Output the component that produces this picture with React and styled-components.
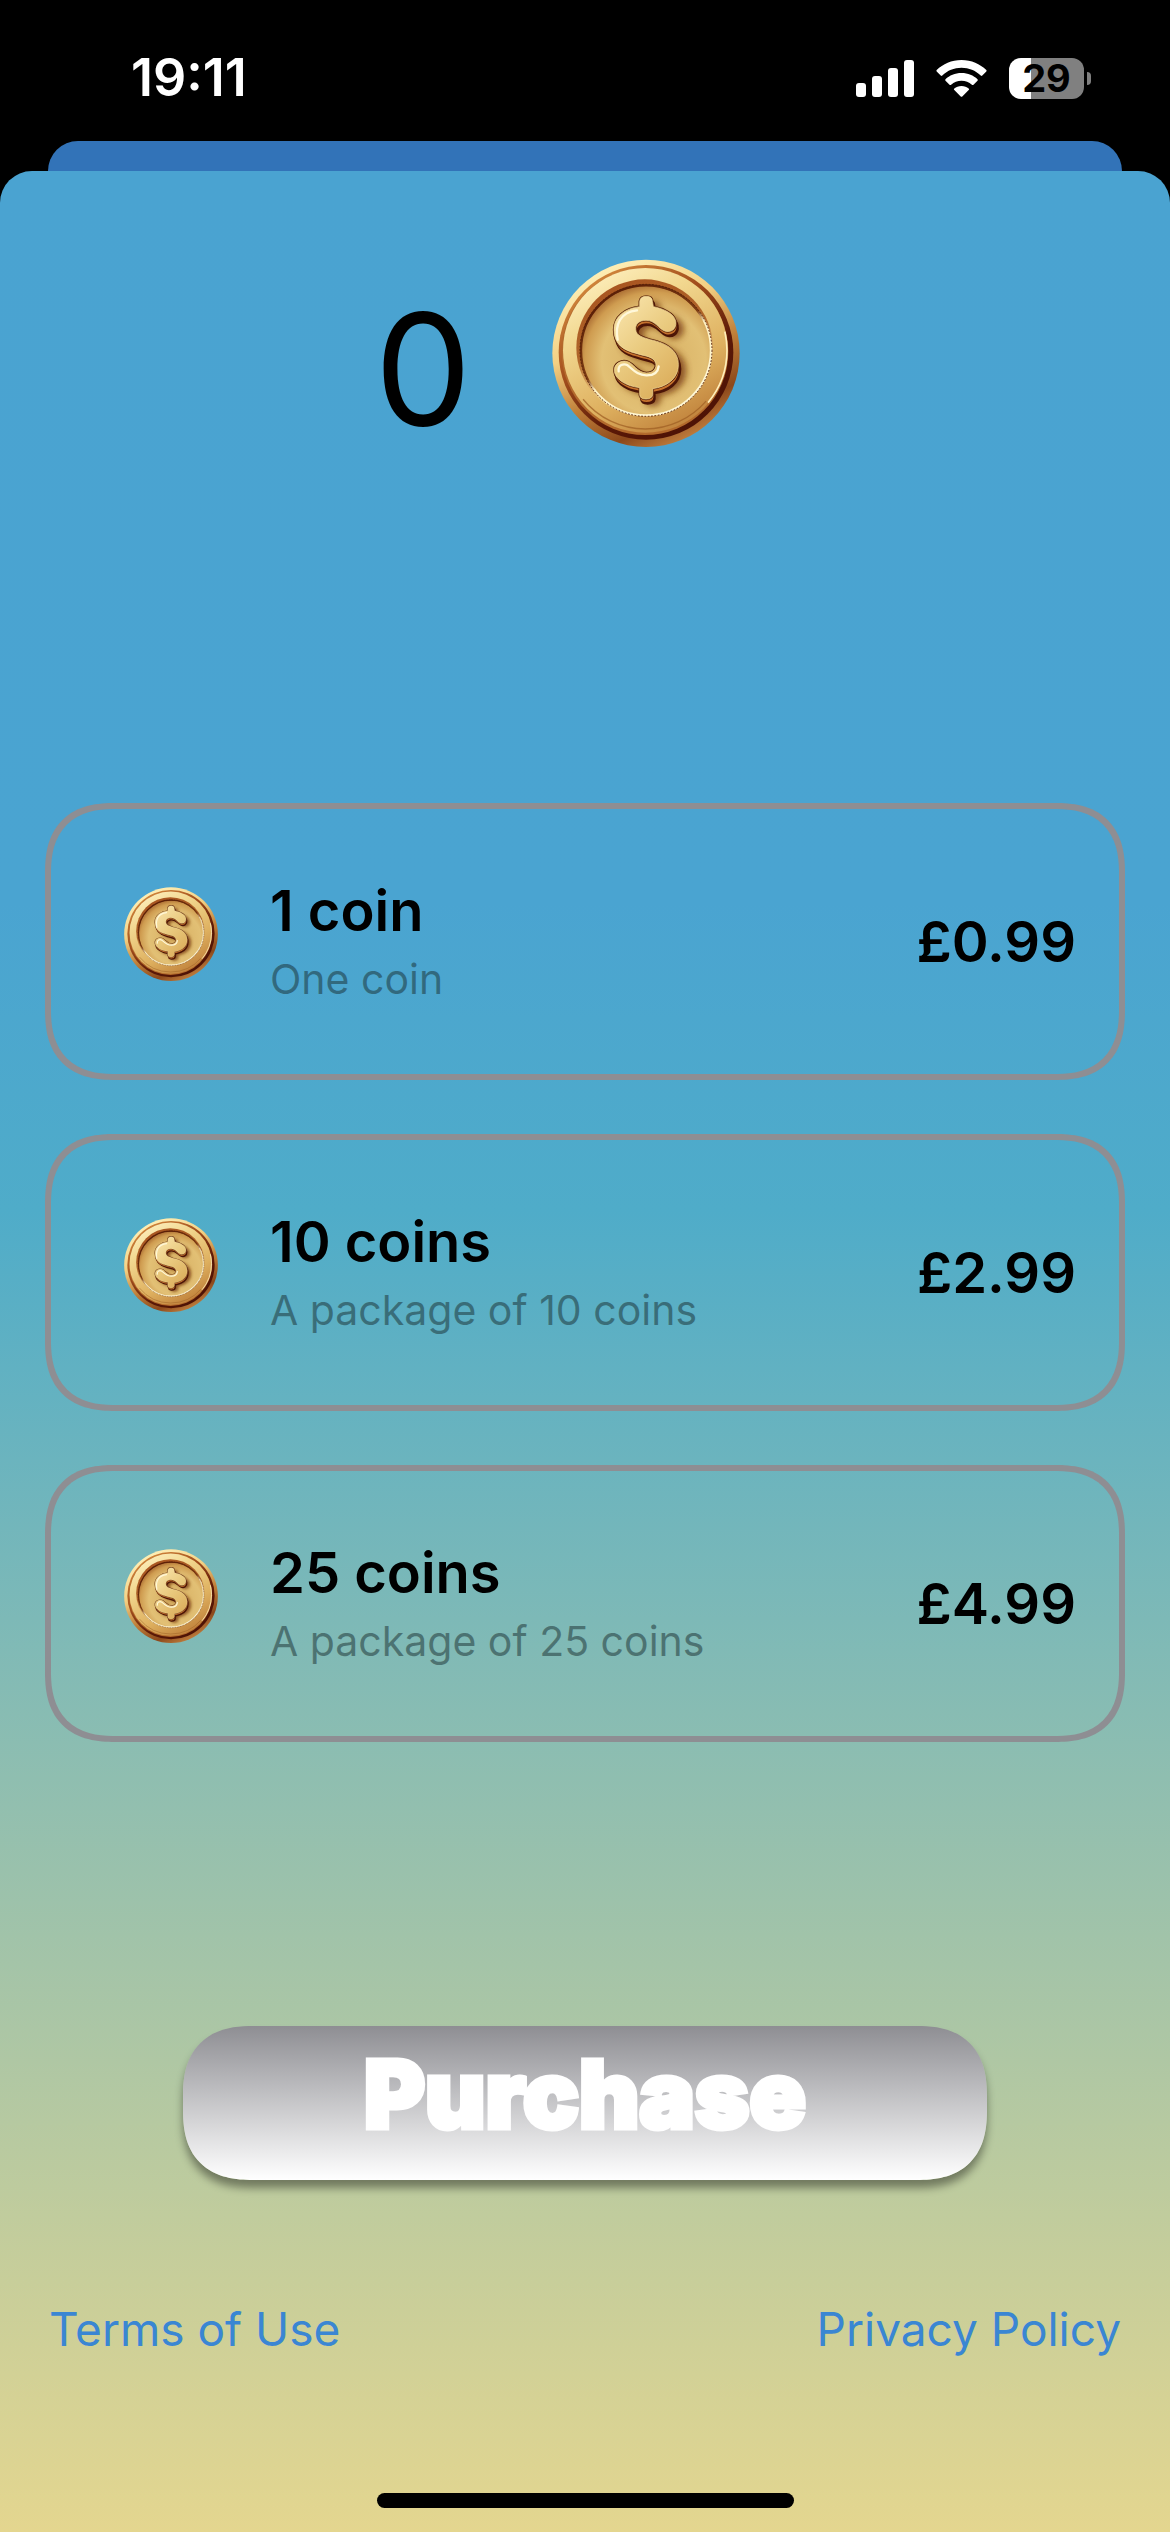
import React, { useState } from 'react';
import styled, { createGlobalStyle } from 'styled-components';

const GlobalStyle = createGlobalStyle`
  * {
    box-sizing: border-box;
  }

  body {
    margin: 0;
    background: #000;
    font-family: Inter, "Liberation Sans", sans-serif;
  }
`;

const Screen = styled.div`
  display: flex;
  flex-direction: column;
  min-height: 100vh;
`;

const StatusBar = styled.header`
  display: flex;
  justify-content: space-between;
  align-items: center;
  height: 141px;
  padding: 15px 79px 0 131px;
  color: white;
`;

const Clock = styled.time`
  font-size: 52px;
  font-weight: 600;
  line-height: 60px;
`;

const StatusIcons = styled.div`
  display: flex;
  align-items: center;
  gap: 22px;
`;

const Battery = styled.div`
  display: flex;
  align-items: center;
  gap: 3px;
`;

const BatteryLevel = styled.div`
  width: 75px;
  height: 41px;
  border-radius: 12px;
  background: linear-gradient(to right, #fff 29%, #808080 29%);
  color: black;
  font-size: 38px;
  font-weight: 700;
  line-height: 41px;
  text-align: center;
`;

const BatteryCap = styled.div`
  width: 4px;
  height: 13px;
  border-radius: 0 4px 4px 0;
  background: #808080;
`;

const BackSheet = styled.div`
  height: 30px;
  margin: 0 48px;
  border-radius: 30px 30px 0 0;
  background: #3273b8;
`;

const Sheet = styled.main`
  flex: 1;
  display: flex;
  flex-direction: column;
  padding: 88px 45px 24px;
  border-radius: 32px 32px 0 0;
  background: linear-gradient(to bottom, #4aa3d1 0%, #4aa4d1 31%, #4facc9 44%, #e4d68f 100%);
`;

const Balance = styled.div`
  display: flex;
  justify-content: center;
  align-items: center;
  gap: 80px;
  padding-right: 56px;
`;

const Amount = styled.span`
  font-size: 154px;
  line-height: 180px;
`;

const Packages = styled.div`
  display: flex;
  flex-direction: column;
  gap: 54px;
  margin-top: 324px;
`;

const Package = styled.button`
  display: flex;
  align-items: center;
  height: 277px;
  padding: 0 43px 0 73px;
  border: 6px solid #8e8e93;
  border-radius: 60px;
  background: none;
  color: black;
  font-family: inherit;
  text-align: left;

  @supports (corner-shape: superellipse(1.3)) {
    border-radius: 70px;
    corner-shape: superellipse(1.3);
  }
`;

const PackageInfo = styled.span`
  flex: 1;
  display: flex;
  flex-direction: column;
  margin-left: 52px;
`;

const PackageName = styled.span`
  font-size: 56px;
  font-weight: 600;
  line-height: 74px;
`;

const Description = styled.span`
  font-size: 41px;
  line-height: 62px;
  color: rgba(24, 44, 46, 0.5);
`;

const Price = styled.span`
  font-size: 56px;
  font-weight: 600;
  line-height: 74px;
`;

const PurchaseButton = styled.button`
  align-self: center;
  width: 75%;
  max-width: 804px;
  height: 154px;
  margin-top: 284px;
  padding: 0 0 18px;
  border: none;
  border-radius: 60px;
  background: linear-gradient(to bottom, #8e8e93, #fff);
  box-shadow: 0 8px 8px rgba(0, 0, 0, 0.4);
  color: white;
  font-family: inherit;
  font-size: 93px;
  font-weight: 900;
  line-height: 112px;
  -webkit-text-stroke: 5px white;
  stroke-linejoin: round;

  @supports (corner-shape: superellipse(1.3)) {
    border-radius: 70px;
    corner-shape: superellipse(1.3);
  }
`;

const Links = styled.nav`
  display: flex;
  justify-content: space-between;
  margin: 119px 4px 0;
`;

const Link = styled.a`
  color: #3a86d3;
  font-size: 46px;
  line-height: 60px;
  text-decoration: none;
`;

const HomeIndicator = styled.div`
  align-self: center;
  width: 417px;
  height: 15px;
  margin-top: auto;
  border-radius: 8px;
  background: black;
`;

const packages = [
  { id: 'coin1', name: '1 coin', description: 'One coin', price: '£0.99' },
  { id: 'coin10', name: '10 coins', description: 'A package of 10 coins', price: '£2.99' },
  { id: 'coin25', name: '25 coins', description: 'A package of 25 coins', price: '£4.99' },
];

const dollar = 'M898 231V215Q900 200 918 200Q936 200 936 215L939 231C965 236 1002 250 1006 275C1010 300 990 310 973 304C953 296 945 272 917 272C895 272 884 285 886 300C888 318 905 322 930 330C985 342 1014 365 1014 405C1014 450 975 472 937 477V495Q935 508 917 508Q899 508 898 495V474C860 470 825 450 822 425C820 400 845 390 862 396C880 402 890 428 918 430C940 430 950 415 946 400C940 380 915 380 890 372C850 362 821 345 821 300C821 260 855 236 898 231Z';

// the box is taller than the coin, so that it sits above the middle of its row
function Coin({ id, size }) {
  const fill = name => `url(#${id}-${name})`;

  return (
    <svg width={size} height={size * 220 / 188} viewBox="635 88 564 660" aria-hidden="true">
      <defs>
        <linearGradient id={`${id}-rim`} x1="0.25" y1="0" x2="0.75" y2="1">
          <stop offset="0" stopColor="#fff3bd" />
          <stop offset="0.35" stopColor="#f3d083" />
          <stop offset="0.6" stopColor="#c0803a" />
          <stop offset="0.82" stopColor="#8c481b" />
          <stop offset="1" stopColor="#d08f48" />
        </linearGradient>
        <linearGradient id={`${id}-groove`} x1="0.2" y1="0" x2="0.85" y2="0.9">
          <stop offset="0" stopColor="#d98f40" />
          <stop offset="0.4" stopColor="#a04c1c" />
          <stop offset="0.7" stopColor="#5c1907" />
          <stop offset="1" stopColor="#4c1205" />
        </linearGradient>
        <linearGradient id={`${id}-band`} x1="0.15" y1="0" x2="0.7" y2="1">
          <stop offset="0" stopColor="#fff2c4" />
          <stop offset="0.3" stopColor="#f2d890" />
          <stop offset="0.7" stopColor="#deb05f" />
          <stop offset="1" stopColor="#bf803a" />
        </linearGradient>
        <linearGradient id={`${id}-wall`} x1="0.3" y1="0" x2="0.65" y2="1">
          <stop offset="0" stopColor="#a85420" />
          <stop offset="0.45" stopColor="#b0662a" />
          <stop offset="0.75" stopColor="#f0cf86" />
          <stop offset="1" stopColor="#fff7d5" />
        </linearGradient>
        <linearGradient id={`${id}-edge`} x1="0.25" y1="0.1" x2="0.75" y2="0.9">
          <stop offset="0" stopColor="#5d2007" />
          <stop offset="0.45" stopColor="#7d3c12" />
          <stop offset="0.55" stopColor="#fff2c4" />
          <stop offset="1" stopColor="#fff7d5" />
        </linearGradient>
        <radialGradient id={`${id}-face`} cx="0.56" cy="0.58" r="0.62">
          <stop offset="0" stopColor="#d6ae60" />
          <stop offset="0.65" stopColor="#e2c075" />
          <stop offset="0.86" stopColor="#cf9c50" />
          <stop offset="1" stopColor="#a05f2a" />
        </radialGradient>
        <linearGradient id={`${id}-sign`} x1="0.1" y1="0" x2="0.7" y2="1">
          <stop offset="0" stopColor="#fae6ae" />
          <stop offset="0.5" stopColor="#eacb80" />
          <stop offset="1" stopColor="#dcae5c" />
        </linearGradient>
        <filter id={`${id}-soft`} x="-30%" y="-30%" width="160%" height="160%">
          <feGaussianBlur stdDeviation="9" />
        </filter>
      </defs>
      <circle cx="917" cy="371" r="281" fill={fill('rim')} />
      <circle cx="917" cy="368" r="262" fill={fill('groove')} />
      <circle cx="914" cy="366" r="250" fill="#b36a2c" />
      <circle cx="915" cy="362" r="247" fill={fill('band')} />
      <circle cx="915" cy="358" r="240" fill="none" stroke="#9c5c22" strokeWidth="4" strokeDasharray="420 1088" strokeDashoffset="-170" opacity="0.7" />
      <circle cx="915" cy="362" r="245" fill="none" stroke="#ffedb9" strokeWidth="5" strokeDasharray="230 1310" strokeDashoffset="60" />
      <circle cx="913" cy="354" r="205" fill={fill('wall')} />
      <circle cx="917" cy="361" r="197" fill="#7d3410" />
      <circle cx="917" cy="363" r="194" fill={fill('face')} />
      <circle cx="917" cy="362" r="195" fill="none" stroke={fill('edge')} strokeWidth="7" />
      <circle cx="917" cy="362" r="198" fill="none" stroke="#54200a" strokeWidth="3" strokeDasharray="5 5" />
      <path d={dollar} transform="translate(20 18)" fill="#733409" stroke="#733409" strokeWidth="8" opacity="0.75" filter={fill('soft')} />
      <path d={dollar} transform="translate(5 13)" fill="#4c1507" stroke="#4c1507" strokeWidth="8" />
      <path d={dollar} transform="translate(2 9)" fill="#c6722e" />
      <path d={dollar} fill={fill('sign')} stroke="#5c260a" strokeWidth="7" />
      <path d={dollar} fill={fill('sign')} stroke="#f6dc9b" strokeWidth="2" />
      <path d="M832 330C823 285 840 247 890 242M835 425C832 406 850 400 862 407C878 420 892 438 920 437C940 437 953 428 955 410" fill="none" stroke="#fff8da" strokeWidth="7" strokeLinecap="round" />
    </svg>
  );
}

function Signal() {
  return (
    <svg width="58" height="37" viewBox="0 0 58 37" fill="white" aria-hidden="true">
      <rect x="0" y="23" width="10" height="14" rx="3" />
      <rect x="16" y="16" width="10" height="21" rx="3" />
      <rect x="32" y="8" width="10" height="29" rx="3" />
      <rect x="48" y="0" width="10" height="37" rx="3" />
    </svg>
  );
}

function Wifi() {
  return (
    <svg width="51" height="37" viewBox="0 0 51 37" fill="white" aria-hidden="true">
      <path d="M25.500 0C35.500 0 44 4 50.300 10Q51 10.800 50.300 11.600L46.300 15.600Q45.500 16.200 44.700 15.500C39.500 10.600 33 7.800 25.500 7.800S11.500 10.600 6.300 15.500Q5.500 16.200 4.700 15.600L0.700 11.600Q0 10.800 0.700 10C7 4 15.500 0 25.500 0Z" />
      <path d="M25.500 13C32 13 37.500 15.500 41.500 19.200Q42.200 20 41.500 20.700L37.500 24.700Q36.700 25.400 35.900 24.700C33 22.200 29.500 20.700 25.500 20.700S18 22.200 15.100 24.700Q14.300 25.400 13.500 24.700L9.500 20.700Q8.800 20 9.500 19.200C13.500 15.500 19 13 25.500 13Z" />
      <path d="M25.500 26C28.500 26 30.800 27 32.700 28.500Q33.500 29.300 32.700 30.100L26.300 36.500Q25.500 37.200 24.700 36.500L18.300 30.100Q17.500 29.300 18.300 28.500C20.200 27 22.500 26 25.500 26Z" />
    </svg>
  );
}

function App() {
  const [selected, setSelected] = useState(null);

  return (
    <Screen>
      <GlobalStyle />
      <StatusBar>
        <Clock>19:11</Clock>
        <StatusIcons>
          <Signal />
          <Wifi />
          <Battery>
            <BatteryLevel>29</BatteryLevel>
            <BatteryCap />
          </Battery>
        </StatusIcons>
      </StatusBar>
      <BackSheet />
      <Sheet>
        <Balance>
          <Amount>0</Amount>
          <Coin id="balance" size={188} />
        </Balance>
        <Packages>
          {
            packages.map(item => (
              <Package
                key={item.id}
                type="button"
                aria-pressed={selected === item.id}
                onClick={() => setSelected(item.id)}
              >
                <Coin id={item.id} size={94} />
                <PackageInfo>
                  <PackageName>{item.name}</PackageName>
                  <Description>{item.description}</Description>
                </PackageInfo>
                <Price>{item.price}</Price>
              </Package>
            ))
          }
        </Packages>
        <PurchaseButton type="button">Purchase</PurchaseButton>
        <Links>
          <Link href="#terms">Terms of Use</Link>
          <Link href="#privacy">Privacy Policy</Link>
        </Links>
        <HomeIndicator />
      </Sheet>
    </Screen>
  );
}

export default App;
